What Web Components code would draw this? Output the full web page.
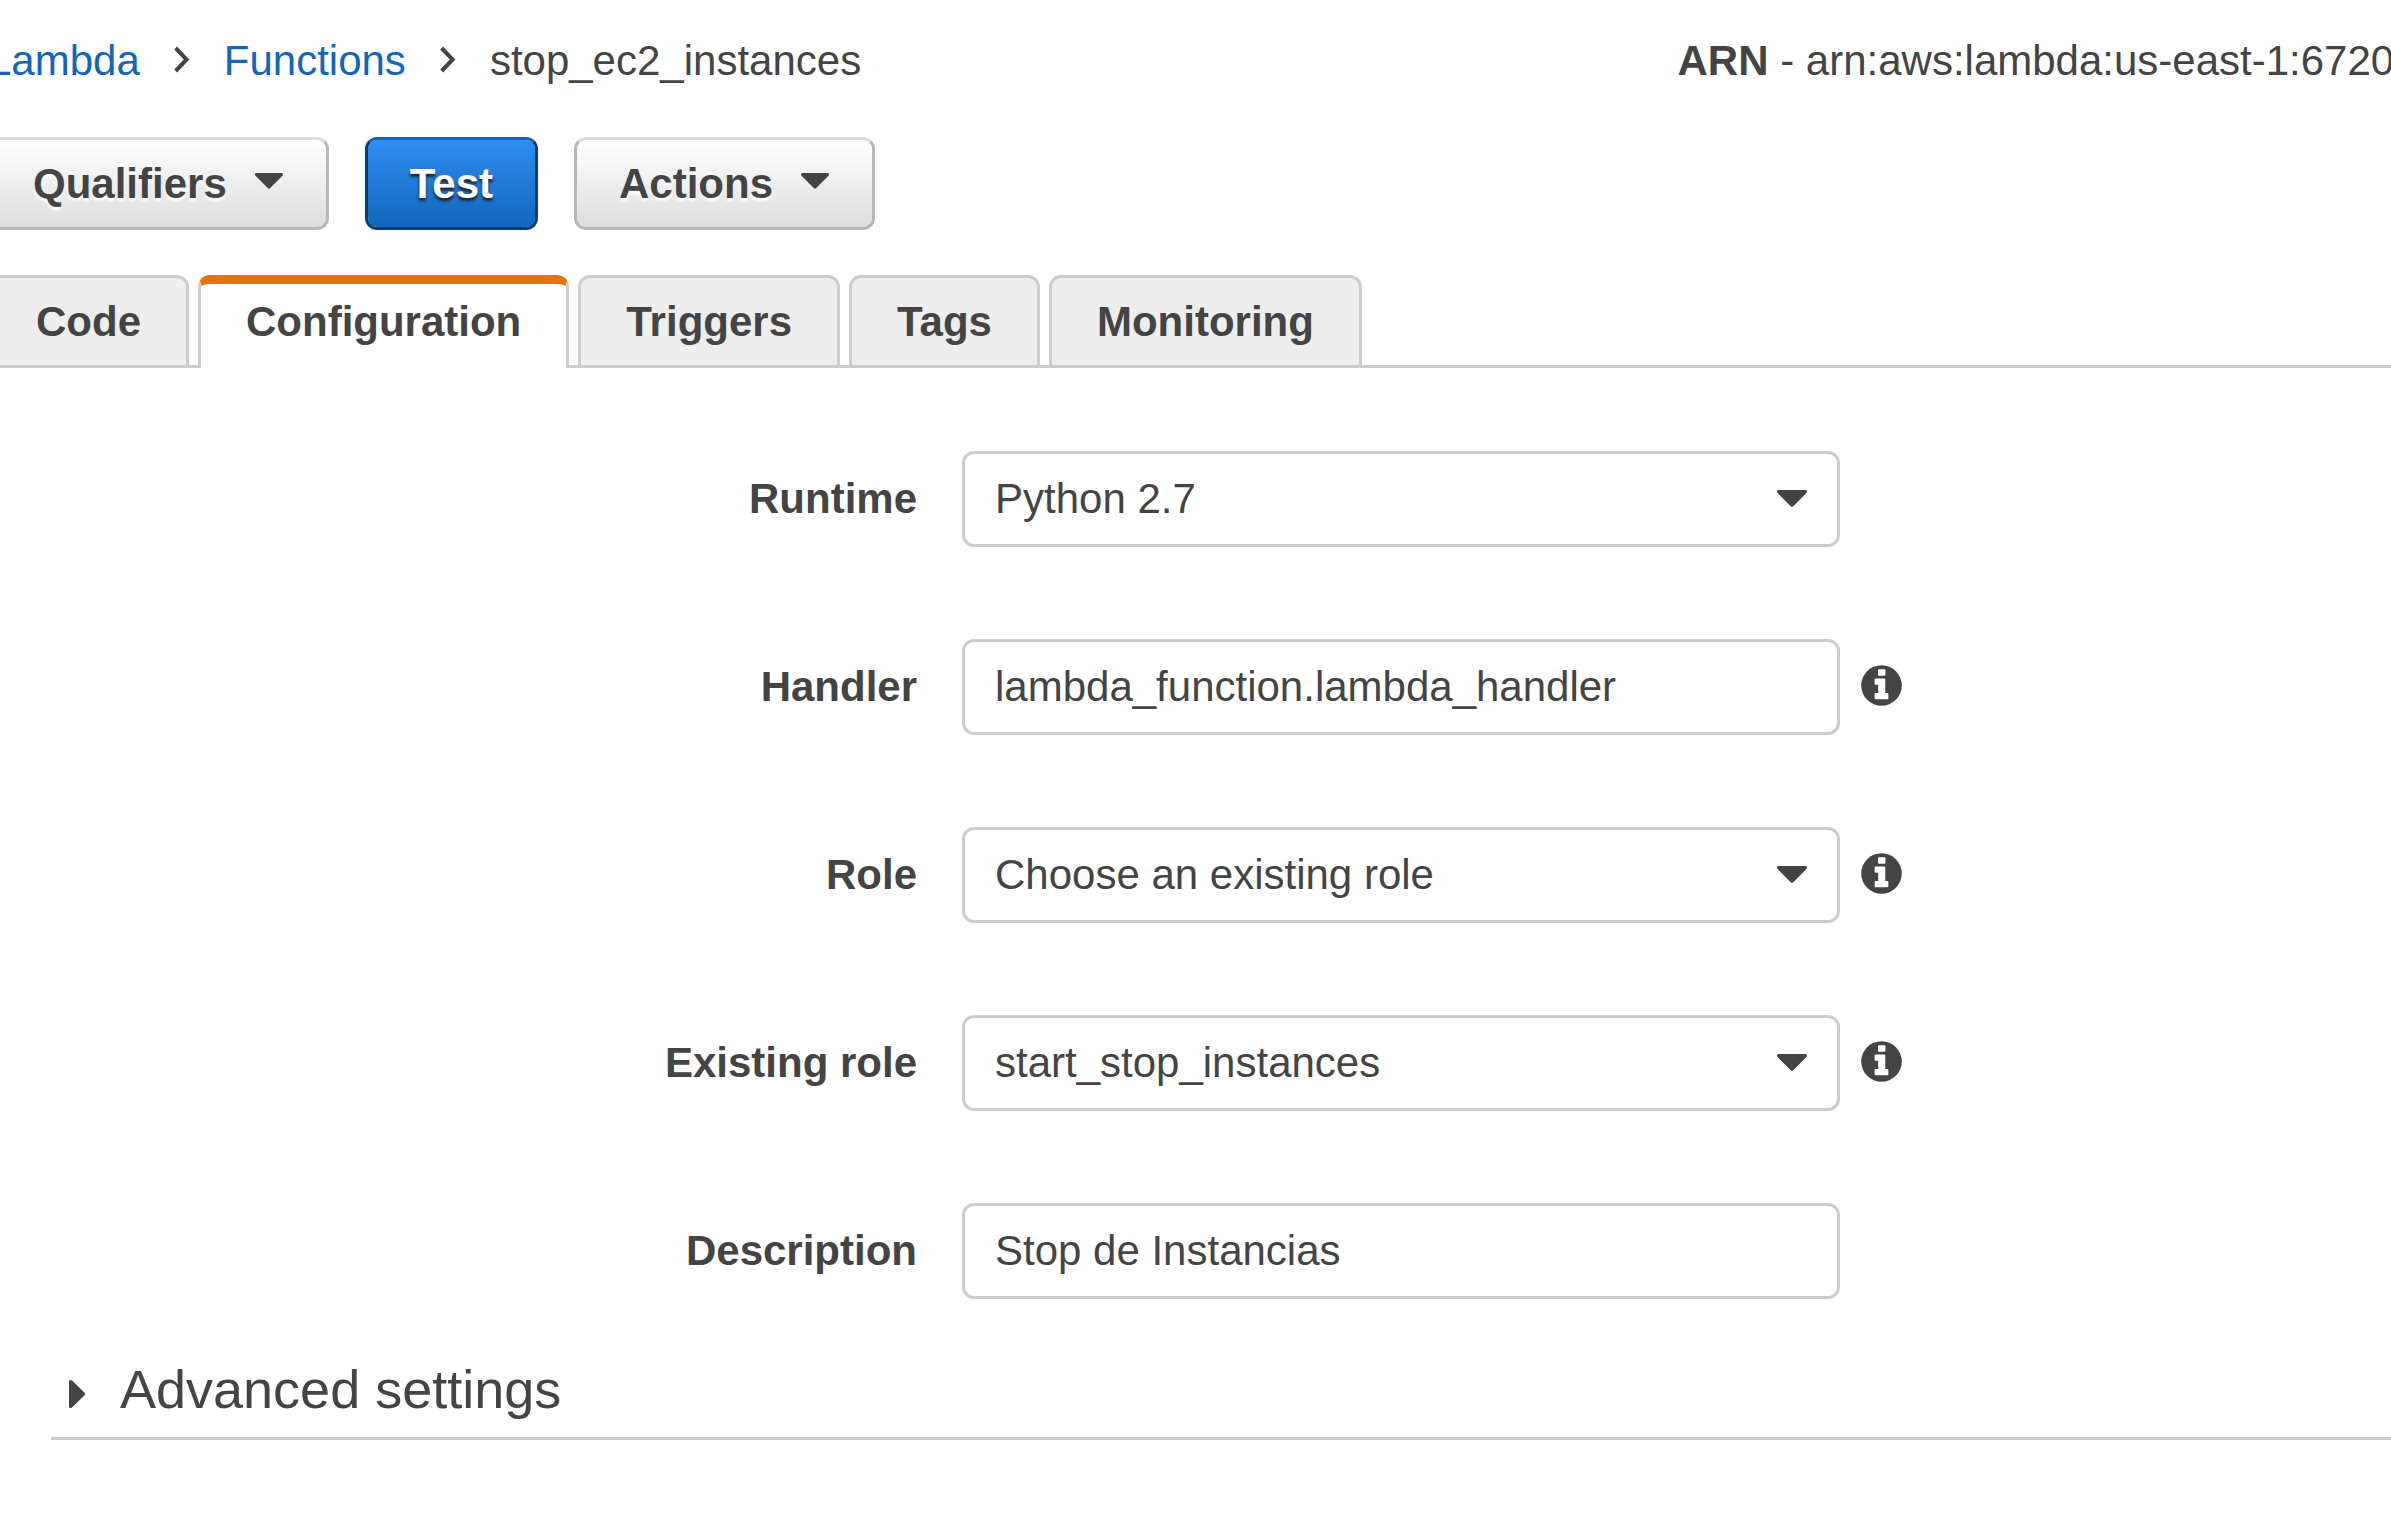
<!DOCTYPE html>
<html lang="en">
<head>
<meta charset="utf-8">
<title>stop_ec2_instances - Lambda</title>
<style>
html,body{margin:0;padding:0;background:#fff}
body{width:2391px;height:1515px;overflow:hidden;font:42px/87px "Liberation Sans",Arial,sans-serif;color:#444}
</style>
</head>
<body>
<lambda-page></lambda-page>
<script>
const define = (name, html) => customElements.define(name, class extends HTMLElement {
  constructor() {
    super();
    this.attachShadow({ mode: 'open' }).innerHTML = html;
  }
});

define('crumb-sep', `<style>
:host{display:block;flex:none;width:84px;height:87px}
svg{display:block}
</style><svg width="84" height="87"><path d="M35.6 31 46.6 42.5 35.6 54" fill="none" stroke="#444" stroke-width="4" stroke-linejoin="miter"/></svg>`);

define('caret-down', `<style>
:host{display:block;flex:none;width:28px}
svg{display:block;width:100%}
</style><svg viewBox="0 0 30 17"><path d="M1.4 0H28.6Q30 0 30 1.6 30 2.4 29.2 3.2L16.3 16.2Q15 17.4 13.7 16.2L.8 3.2Q0 2.4 0 1.6 0 0 1.4 0Z" fill="#444"/></svg>`);

define('info-icon', `<style>
:host{display:block;flex:none;width:41px;height:41px}
svg{display:block}
</style><svg width="41" height="41" viewBox="0 0 41 41"><circle cx="20.5" cy="20.5" r="20.3" fill="#444"/><g fill="#fff"><rect x="17" y="4.3" width="7.4" height="6.4" rx="1"/><path d="M14.6 13.5H23.2Q24.3 13.5 24.3 14.6V28H26.4Q27.4 28 27.4 29V33.3Q27.4 34.3 26.4 34.3H14.6Q13.6 34.3 13.6 33.3V29Q13.6 28 14.6 28H17.2V19.7H14.6Q13.6 19.7 13.6 18.7V14.5Q13.6 13.5 14.6 13.5Z"/></g></svg>`);

define('aws-button', `<style>
:host{display:flex;box-sizing:border-box;height:93px;padding:0 42px;border:3px solid #b7b7b7;border-top-color:#dcdcdc;border-radius:12px;background:linear-gradient(#fff,#ddd) padding-box;font-weight:bold;text-shadow:0 3px 3px #fff;white-space:nowrap}
:host([primary]){color:#fff;border-color:#093d74;border-top-color:#1263bb;background:linear-gradient(#2e8eef,#1166bb) padding-box;text-shadow:0 3px 3px #222}
caret-down{display:none;margin:33px 1px 0 28px}
:host([menu]) caret-down{display:block}
</style><slot></slot><caret-down></caret-down>`);

define('aws-tab', `<style>
:host{display:block;box-sizing:border-box;height:90px;padding:0 45px;border:3px solid #ccc;border-bottom:0;border-radius:12px 12px 0 0;background:#eee;font-weight:bold;white-space:nowrap}
:host([active]){height:93px;margin-bottom:-3px;border-top:9px solid #e07700;background:#fff;line-height:75px;border-radius:12px 12px 3px 3px}
</style><slot></slot>`);

define('tab-bar', `<style>
:host{display:flex;gap:9px;height:90px;margin-left:-12px;border-bottom:3px solid #ccc}
</style><slot></slot>`);

define('form-row', `<style>
:host{display:flex;align-items:center;height:96px}
.label{width:917px;height:96px;margin-right:45px;text-align:right;font-weight:bold;line-height:95px}
.box{display:flex;box-sizing:border-box;align-items:center;justify-content:space-between;width:878px;height:96px;padding:0 30px 1px;border:3px solid #ccc;border-radius:12px;line-height:89px;white-space:nowrap}
caret-down,info-icon{display:none}
caret-down{width:30px}
info-icon{margin:-4px 0 0 21.4px}
:host([menu]) caret-down,:host([info]) info-icon{display:block}
</style><div class="label"><slot name="label"></slot></div><div class="box"><span><slot></slot></span><caret-down></caret-down></div><info-icon></info-icon>`);

define('section-toggle', `<style>
:host{display:flex;align-items:flex-start;margin-left:51px;height:90px;border-bottom:3px solid #ccc;font-size:54px;line-height:84px}
svg{display:block;flex:none;margin:33px 34px 0 18px}
</style><svg width="17" height="28"><path d="M0 1.5Q0 0 1.5 0 2.4 0 3 .6L15.6 12.8Q16.8 14 15.6 15.2L3 27.4Q2.4 28 1.5 28 0 28 0 26.5Z" fill="#444"/></svg><slot></slot>`);

define('lambda-page', `<style>
:host{display:flex;flex-direction:column;width:2391px;height:1515px;overflow:hidden}
header{display:flex;padding-top:17px;height:87px;white-space:nowrap}
nav{display:flex;flex:none;margin-left:-12px;width:1689.5px}
.arn{flex:none}
a{color:#1166bb}
.actions{display:flex;gap:36px;margin:33px 0 45px -12px}
.form{display:flex;flex-direction:column;gap:92px;margin:83px 0 48px}
</style>
<header><nav><a>Lambda</a><crumb-sep></crumb-sep><a>Functions</a><crumb-sep></crumb-sep><span>stop_ec2_instances</span></nav><div class="arn"><b>ARN</b> - arn:aws:lambda:us-east-1:6720</div></header>
<div class="actions"><aws-button menu>Qualifiers</aws-button><aws-button primary>Test</aws-button><aws-button menu>Actions</aws-button></div>
<tab-bar><aws-tab>Code</aws-tab><aws-tab active>Configuration</aws-tab><aws-tab>Triggers</aws-tab><aws-tab>Tags</aws-tab><aws-tab>Monitoring</aws-tab></tab-bar>
<div class="form">
<form-row menu><span slot="label">Runtime</span>Python 2.7</form-row>
<form-row info><span slot="label">Handler</span>lambda_function.lambda_handler</form-row>
<form-row menu info><span slot="label">Role</span>Choose an existing role</form-row>
<form-row menu info><span slot="label">Existing role</span>start_stop_instances</form-row>
<form-row><span slot="label">Description</span>Stop de Instancias</form-row>
</div>
<section-toggle>Advanced settings</section-toggle>`);
</script>
</body>
</html>
